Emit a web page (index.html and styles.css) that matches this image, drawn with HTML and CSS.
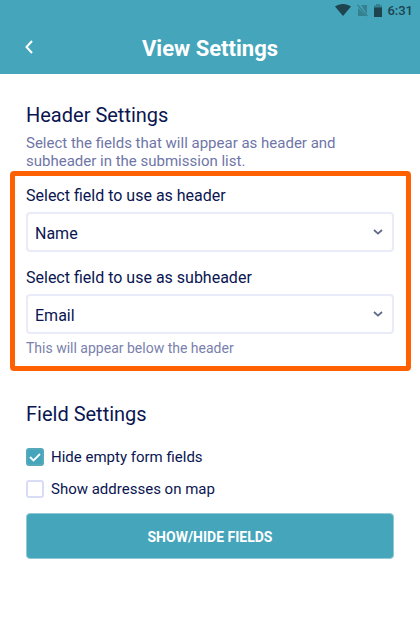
FILE: index.html
```html
<!DOCTYPE html>
<html lang="en">
<head>
  <meta charset="UTF-8">
  <meta name="viewport" content="width=device-width, initial-scale=1.0">
  <title>View Settings</title>
  <link rel="stylesheet" href="styles.css">
</head>
<body>
  <header class="header">
    <div class="status-bar">
      <svg class="wifi" width="16" height="12" viewBox="0 0 16 12"><path d="M0 2.6C4.6-.8 11.4-.8 16 2.6L8 12z" fill="#1d444f"/></svg>
      <svg class="no-sim" width="11" height="13" viewBox="0 0 11 13"><path d="M4 1h6v9zM1 4l8.500 8H1z" fill="#34808f"/><path d="M.5 1l10 11" stroke="#34808f" stroke-width="1.2"/></svg>
      <svg class="battery" width="8" height="13" viewBox="0 0 8 13"><path d="M0 1.500h2V0h4v1.500h2V4H0z" fill="#34808f"/><path d="M0 3.500h8V13H0z" fill="#1d444f"/></svg>
      <span class="time">6:31</span>
    </div>
    <div class="title-bar">
      <button class="back-button" type="button" aria-label="Back">
        <svg width="8" height="14" viewBox="0 0 8 14"><path d="M7 1L1.500 7 7 13" fill="none" stroke="#fff" stroke-width="2"/></svg>
      </button>
      <h1>View Settings</h1>
    </div>
  </header>

  <main class="content">
    <h2>Header Settings</h2>
    <p class="description">Select the fields that will appear as header and subheader in the submission list.</p>

    <div class="highlight">
      <div class="field">
        <label for="headerField">Select field to use as header</label>
        <div class="select-box">
          <select id="headerField">
            <option selected>Name</option>
            <option>Email</option>
          </select>
          <svg class="arrow" width="10" height="6" viewBox="0 0 10 6"><path d="M1 1l4 3.6L9 1" fill="none" stroke="#60698a" stroke-width="1.8"/></svg>
        </div>
      </div>
      <div class="field">
        <label for="subheaderField">Select field to use as subheader</label>
        <div class="select-box">
          <select id="subheaderField">
            <option>Name</option>
            <option selected>Email</option>
          </select>
          <svg class="arrow" width="10" height="6" viewBox="0 0 10 6"><path d="M1 1l4 3.6L9 1" fill="none" stroke="#60698a" stroke-width="1.8"/></svg>
        </div>
        <p class="hint">This will appear below the header</p>
      </div>
    </div>

    <h2>Field Settings</h2>
    <div class="options">
      <label class="option"><input type="checkbox" checked>Hide empty form fields</label>
      <label class="option"><input type="checkbox">Show addresses on map</label>
    </div>
    <button class="main-button" type="button">SHOW/HIDE FIELDS</button>
  </main>
</body>
</html>
```
FILE: styles.css
```css
* {
  box-sizing: border-box;
}
body {
  margin: 0;
  background-color: #fff;
  color: #0a1551;
  font-family: Roboto, "Liberation Sans", sans-serif;
}
h1, h2, p {
  margin: 0;
}
.header {
  background-color: #44a5bb;
}
.status-bar {
  display: flex;
  align-items: center;
  justify-content: flex-end;
  height: 20px;
  padding-right: 7px;
}
.no-sim {
  margin: 0 6px 0 6px;
}
.time {
  margin-left: 5px;
  color: #1d444f;
  font-size: 13px;
  font-weight: 500;
}
.title-bar {
  display: grid;
  grid-template-columns: 58px 1fr 58px;
  align-items: center;
  height: 54px;
}
.back-button {
  display: flex;
  padding: 8px 25px;
  border: none;
  background: none;
  cursor: pointer;
}
h1 {
  padding-top: 4px;
  color: #fff;
  font-size: 22px;
  font-weight: 700;
  line-height: 26px;
  text-align: center;
}
.content {
  padding: 29px 26px 40px;
}
h2 {
  font-size: 20px;
  font-weight: 400;
  line-height: 24px;
}
.description {
  margin-top: 7px;
  color: #6f76a7;
  font-size: 15px;
  line-height: 18px;
}
.highlight {
  margin: 1px -17px 31px -16px;
  padding: 10px 12px 9px 11px;
  border: 5px solid #ff6100;
  border-radius: 4px;
}
.field + .field {
  margin-top: 16px;
}
.field label {
  display: block;
  font-size: 16px;
  line-height: 20px;
}
.select-box {
  display: grid;
  align-items: center;
  margin-top: 6px;
}
.select-box select {
  grid-area: 1 / 1;
  width: 100%;
  height: 40px;
  padding: 2px 7px 0;
  border: 2px solid #e9ebf8;
  border-radius: 4px;
  background-color: #fff;
  color: #0a1551;
  font-family: inherit;
  font-size: 16px;
  appearance: none;
}
.arrow {
  grid-area: 1 / 1;
  justify-self: end;
  margin-right: 11px;
  pointer-events: none;
}
.hint {
  margin-top: 5px;
  color: #7a7fac;
  font-size: 14px;
  line-height: 18px;
}
.options {
  display: flex;
  flex-direction: column;
  gap: 14px;
  margin: 22px 0 15px;
}
.option {
  display: flex;
  align-items: center;
  gap: 7px;
  font-size: 15px;
  line-height: 18px;
}
.option input {
  width: 18px;
  height: 18px;
  margin: 0;
  border: 2px solid #d9dcf5;
  border-radius: 3px;
  background-color: #fff;
  appearance: none;
}
.option input:checked {
  border-color: #55a9bb;
  background: #44a5bb url("data:image/svg+xml,%3Csvg xmlns='http://www.w3.org/2000/svg' viewBox='0 0 14 14'%3E%3Cpath d='M2 7l3.500 3.500L12 4' fill='none' stroke='white' stroke-width='1.8'/%3E%3C/svg%3E") center / 14px no-repeat;
}
.main-button {
  width: 100%;
  height: 46px;
  padding-top: 3px;
  border: 1px solid #8fcad6;
  border-radius: 4px;
  background-color: #44a5bb;
  color: #fff;
  font-family: inherit;
  font-size: 14px;
  font-weight: 700;
  cursor: pointer;
}
```
